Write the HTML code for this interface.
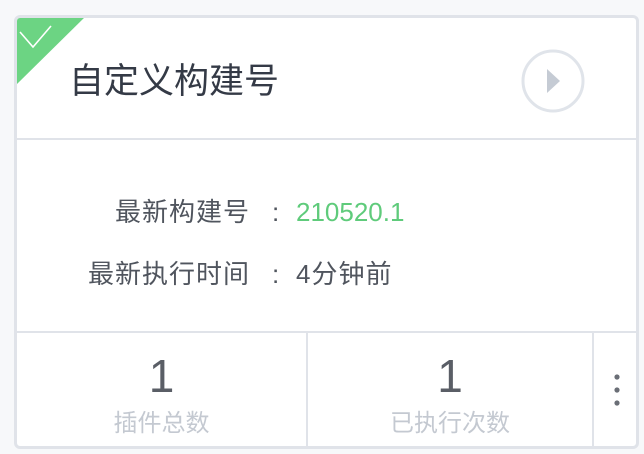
<!DOCTYPE html>
<html><head><meta charset="utf-8"><style>
body{margin:0;width:644px;height:454px;background:#f7f8fa;position:relative;overflow:hidden;font-family:"Liberation Sans","Noto Sans CJK SC",sans-serif;}
.card{position:absolute;left:14px;top:15px;width:619px;height:428px;background:#fff;border:3px solid #e0e3e9;border-radius:6px;overflow:hidden;}
.t{position:absolute;white-space:nowrap;}
.l{font-size:26px;color:#50555e;line-height:32px;letter-spacing:1px}
</style></head><body>
<div class="card">
<svg width="100" height="100" style="position:absolute;left:-3px;top:-3px">
<polygon points="0,0 73,0 0,72" fill="#6cd483"/>
<polyline points="6,17 19,32 37,11" fill="none" stroke="#fff" stroke-width="1.6"/>
</svg>
<div class="t" style="left:52px;top:42px;font-size:35px;color:#343a46;line-height:44px">自定义构建号</div>
<svg width="66" height="66" style="position:absolute;left:503px;top:30px">
<circle cx="33" cy="33" r="30" fill="none" stroke="#e0e4ea" stroke-width="3"/>
<polygon points="27,21 40,33 27,45" fill="#c5cbd4"/>
</svg>
<div style="position:absolute;left:0;right:0;top:120px;height:2px;background:#e0e3e9"></div>
<div class="t l" style="right:386px;top:178px">最新构建号</div>
<div class="t l" style="left:255px;top:178px">:</div>
<div class="t l" style="left:279px;top:178px;color:#5fcb7b;letter-spacing:0">210520.1</div>
<div class="t l" style="right:386px;top:240px">最新执行时间</div>
<div class="t l" style="left:255px;top:240px">:</div>
<div class="t l" style="left:279px;top:240px">4分钟前</div>
<div style="position:absolute;left:0;right:0;top:313px;height:2px;background:#e0e3e9"></div>
<div style="position:absolute;left:289px;top:315px;width:2px;height:120px;background:#e0e3e9"></div>
<div style="position:absolute;left:575px;top:315px;width:2px;height:120px;background:#e0e3e9"></div>
<div class="t" style="left:0;width:289px;text-align:center;top:332px;font-size:46px;color:#5a5e66;line-height:52px">1</div>
<div class="t" style="left:291px;width:284px;text-align:center;top:332px;font-size:46px;color:#5a5e66;line-height:52px">1</div>
<div class="t" style="left:0;width:289px;text-align:center;top:391px;font-size:24px;color:#c4c9d1;line-height:30px">插件总数</div>
<div class="t" style="left:291px;width:284px;text-align:center;top:391px;font-size:24px;color:#c4c9d1;line-height:30px">已执行次数</div>
<svg width="10" height="40" style="position:absolute;left:595px;top:353px">
<circle cx="5" cy="6" r="2.6" fill="#6a6e76"/><circle cx="5" cy="19" r="2.6" fill="#6a6e76"/><circle cx="5" cy="32" r="2.6" fill="#6a6e76"/>
</svg>
</div>
</body></html>
